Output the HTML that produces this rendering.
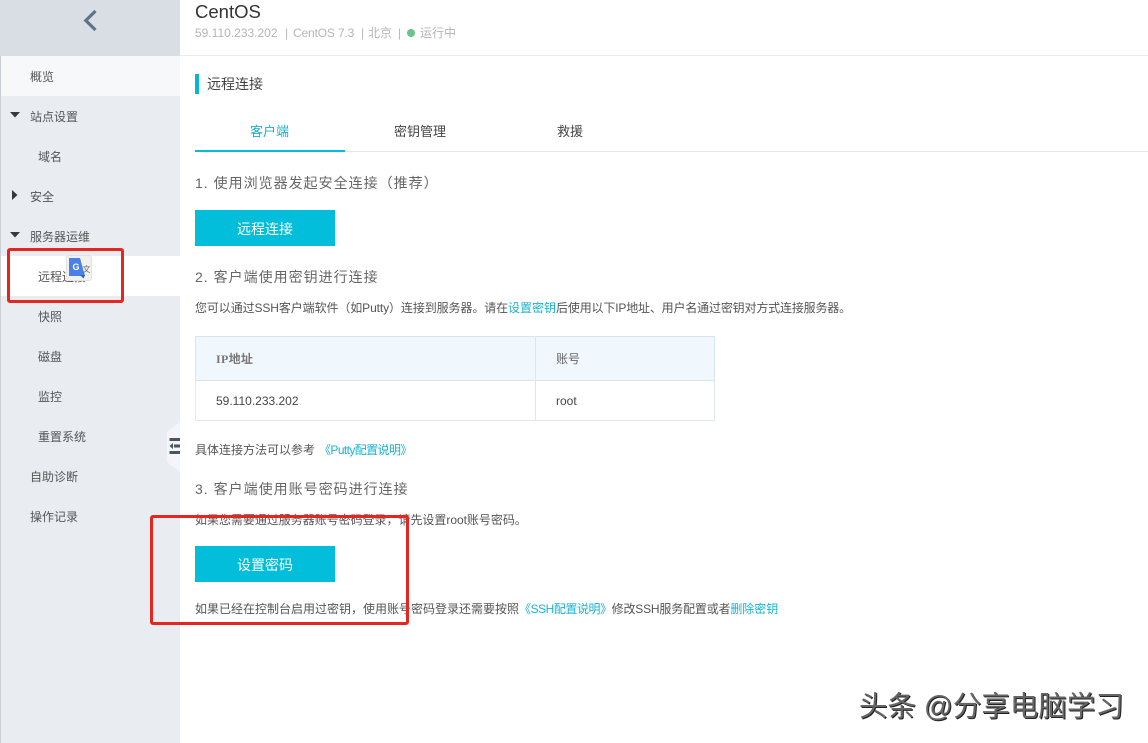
<!DOCTYPE html>
<html lang="zh">
<head>
<meta charset="utf-8">
<style>
html,body{margin:0;padding:0;background:#fff;}
body{width:1148px;height:743px;position:relative;overflow:hidden;font-family:"Liberation Sans","Noto Sans CJK SC",sans-serif;font-size:12px;color:#555;}
.a{position:absolute;white-space:nowrap;line-height:16px;}
.b{position:absolute;}
.m{color:#555;font-size:12px;}
.h{font-size:14px;color:#666;letter-spacing:1px;}
.l{color:#17b4cf;}
.p{font-size:12px;color:#555;}
.s{color:#b5b5b5;top:25px;}
</style>
</head>
<body>
<div class="b" style="left:0;top:0;width:180px;height:743px;background:#e9edf2;"></div>
<div class="b" style="left:0;top:0;width:1px;height:743px;background:#c9ced4;"></div>
<div class="b" style="left:0;top:0;width:180px;height:56px;background:#d9dee4;"></div>
<svg class="b" style="left:82px;top:9px" width="18" height="24" viewBox="0 0 18 24"><path d="M13.5 2 L3.8 11.5 L13.5 21" fill="none" stroke="#5f7489" stroke-width="3.2"/></svg>
<div class="b" style="left:1px;top:56px;width:179px;height:40px;background:#f7f8f9;"></div>
<div class="b" style="left:1px;top:256px;width:179px;height:40px;background:#fff;"></div>

<div class="a m" style="left:30px;top:69px">概览</div>
<div class="a m" style="left:30px;top:109px">站点设置</div>
<div class="a m" style="left:38px;top:149px">域名</div>
<div class="a m" style="left:30px;top:189px">安全</div>
<div class="a m" style="left:30px;top:229px">服务器运维</div>
<div class="a m" style="left:38px;top:269px">远程连接</div>
<div class="a m" style="left:38px;top:309px">快照</div>
<div class="a m" style="left:38px;top:349px">磁盘</div>
<div class="a m" style="left:38px;top:389px">监控</div>
<div class="a m" style="left:38px;top:429px">重置系统</div>
<div class="a m" style="left:30px;top:469px">自助诊断</div>
<div class="a m" style="left:30px;top:509px">操作记录</div>

<svg class="b" style="left:10px;top:112px" width="10" height="6"><path d="M0 0H10L5 5.5Z" fill="#33393f"/></svg>
<svg class="b" style="left:12px;top:190px" width="6" height="10"><path d="M0 0V10L5.5 5Z" fill="#33393f"/></svg>
<svg class="b" style="left:10px;top:232px" width="10" height="6"><path d="M0 0H10L5 5.5Z" fill="#33393f"/></svg>

<svg class="b" style="left:166px;top:422px" width="14" height="50"><path d="M14 0V50L1 40V10Z" fill="#f3f5f8"/><path d="M3.5 17.5H14M8 24H14M3.5 30.5H14" stroke="#4b5560" stroke-width="3" fill="none"/><path d="M7 21V27L3.5 24Z" fill="#4b5560"/></svg>

<div class="b" style="left:66px;top:255px;width:26px;height:26px;background:#f1f1ee;border:1px solid #e2e2e2;border-radius:3px;box-sizing:border-box;"></div>
<svg class="b" style="left:68px;top:257px" width="23" height="22"><path d="M1 1H12L17 19H1Z" fill="#4a80e8"/><path d="M12 18L15.5 21.5L17 18Z" fill="#2f5fc0"/><text x="4.5" y="13" font-size="9" font-weight="bold" fill="#fff" font-family="Liberation Sans">G</text><text x="14.5" y="15" font-size="8" fill="#666" font-family="Noto Sans CJK SC">文</text></svg>

<div class="a" style="left:195px;top:1px;font-size:18.5px;line-height:22px;color:#333;">CentOS</div>
<div class="a s" style="left:195px;">59.110.233.202</div>
<div class="a s" style="left:285px">|</div>
<div class="a s" style="left:293px;letter-spacing:-.15px">CentOS 7.3</div>
<div class="a s" style="left:361px">|</div>
<div class="a s" style="left:368px">北京</div>
<div class="a s" style="left:398px">|</div>
<div class="b" style="left:407px;top:29px;width:8px;height:8px;border-radius:50%;background:#6cc487;"></div>
<div class="a s" style="left:420px;">运行中</div>
<div class="b" style="left:180px;top:55px;width:968px;height:1px;background:#ececec;"></div>

<div class="b" style="left:195px;top:74px;width:4px;height:20px;background:#00b8d4;"></div>
<div class="a" style="left:207px;top:76px;font-size:14px;color:#444;">远程连接</div>

<div class="b" style="left:195px;top:151px;width:953px;height:1px;background:#e6e6e6;"></div>
<div class="b" style="left:195px;top:150px;width:150px;height:2px;background:#02bedb;"></div>
<div class="a" style="left:250px;top:124px;color:#17b0cc;font-size:13px">客户端</div>
<div class="a" style="left:394px;top:124px;color:#444;font-size:13px">密钥管理</div>
<div class="a" style="left:557px;top:124px;color:#444;font-size:13px">救援</div>

<div class="a h" style="left:195px;top:175px">1. 使用浏览器发起安全连接（推荐）</div>
<div class="b" style="left:195px;top:210px;width:140px;height:36px;background:#02bedb;"></div>
<div class="a" style="left:195px;top:221px;width:140px;text-align:center;color:#fff;font-size:14px;">远程连接</div>

<div class="a h" style="left:195px;top:269px">2. 客户端使用密钥进行连接</div>
<div class="a p" style="left:195px;top:300px;letter-spacing:-.1px">您可以通过SSH客户端软件（如Putty）连接到服务器。请在<span class="l" style="letter-spacing:0">设置密钥</span><span style="letter-spacing:-.17px">后使用以下IP地址、用户名通过密钥对方式连接服务器。</span></div>

<div class="b" style="left:195px;top:336px;width:520px;height:85px;border:1px solid #e3e8ec;box-sizing:border-box;"></div>
<div class="b" style="left:195px;top:336px;width:520px;height:45px;background:#f0f7fd;border:1px solid #d9e6f0;box-sizing:border-box;"></div>
<div class="b" style="left:535px;top:336px;width:1px;height:85px;background:#dde6ee;"></div>
<div class="a" style="left:216px;top:351px;font-weight:bold;color:#777;letter-spacing:.3px;font-family:'Liberation Serif','Noto Sans CJK SC',serif;">IP地址</div>
<div class="a" style="left:556px;top:351px;color:#666;">账号</div>
<div class="a" style="left:216px;top:393px;color:#444;">59.110.233.202</div>
<div class="a" style="left:556px;top:393px;color:#444;">root</div>

<div class="a p" style="left:195px;top:442px">具体连接方法可以参考<span class="l" style="margin-left:4px;letter-spacing:-.6px">《Putty配置说明》</span></div>

<div class="a h" style="left:195px;top:481px">3. 客户端使用账号密码进行连接</div>
<div class="a p" style="left:195px;top:512px;letter-spacing:-.03px">如果您需要通过服务器账号密码登录，请先设置root账号密码。</div>
<div class="b" style="left:195px;top:546px;width:140px;height:36px;background:#02bedb;"></div>
<div class="a" style="left:195px;top:557px;width:140px;text-align:center;color:#fff;font-size:14px;">设置密码</div>
<div class="a p" style="left:195px;top:601px;">如果已经在控制台启用过密钥，使用账号密码登录还需要按照<span class="l" style="letter-spacing:-.45px">《SSH配置说明》</span><span style="letter-spacing:-.18px">修改SSH服务配置或者</span><span class="l" style="letter-spacing:-.05px">删除密钥</span></div>

<div class="b" style="left:7px;top:248px;width:117px;height:55px;border:3px solid #e5261f;border-radius:3px;box-sizing:border-box;"></div>
<div class="b" style="left:150px;top:515px;width:259px;height:110px;border:3px solid #e5261f;border-radius:3px;box-sizing:border-box;"></div>

<div class="a" style="left:859px;top:691px;font-size:28.5px;line-height:32px;color:#666;text-shadow:1px 1px 0 #222;">头条 @分享电脑学习</div>
</body>
</html>
